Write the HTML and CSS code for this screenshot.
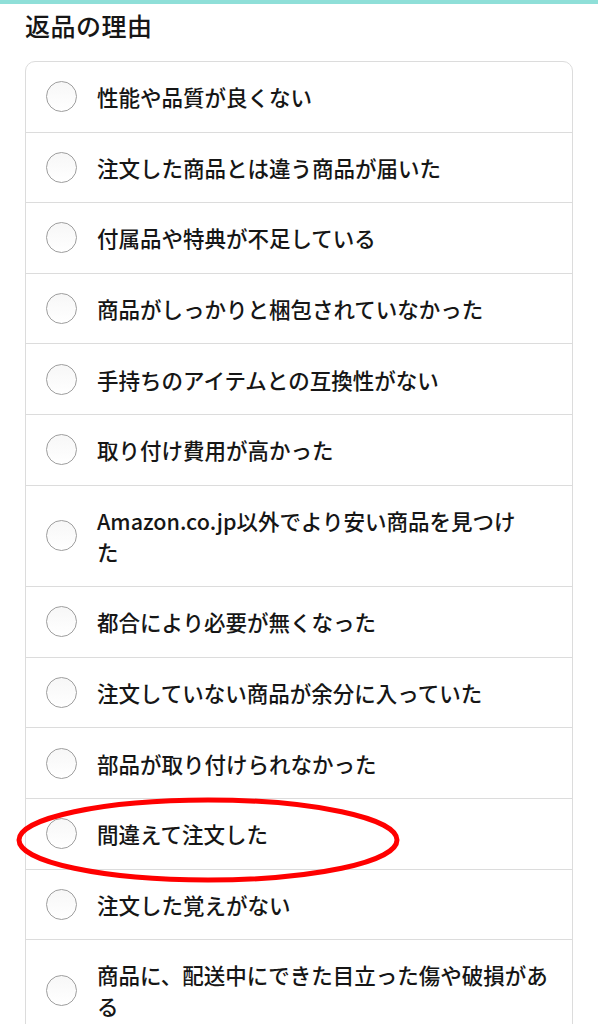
FILE: index.html
```html
<!DOCTYPE html>
<html lang="ja">
<head>
    <meta charset="UTF-8">
    <meta name="viewport" content="width=device-width, initial-scale=1.0">
    <title>返品の理由</title>
    <link rel="stylesheet" href="styles.css">
</head>
<body>
    <div class="top-bar"></div>

    <div class="page">
        <h1 class="page-title">返品の理由</h1>

        <ul class="reason-list">
            <li class="reason"><span class="radio"></span><span class="label">性能や品質が良くない</span></li>
            <li class="reason"><span class="radio"></span><span class="label">注文した商品とは違う商品が届いた</span></li>
            <li class="reason"><span class="radio"></span><span class="label">付属品や特典が不足している</span></li>
            <li class="reason"><span class="radio"></span><span class="label">商品がしっかりと梱包されていなかった</span></li>
            <li class="reason"><span class="radio"></span><span class="label">手持ちのアイテムとの互換性がない</span></li>
            <li class="reason"><span class="radio"></span><span class="label">取り付け費用が高かった</span></li>
            <li class="reason"><span class="radio"></span><span class="label">Amazon.co.jp以外でより安い商品を見つけ<br>た</span></li>
            <li class="reason"><span class="radio"></span><span class="label">都合により必要が無くなった</span></li>
            <li class="reason"><span class="radio"></span><span class="label">注文していない商品が余分に入っていた</span></li>
            <li class="reason"><span class="radio"></span><span class="label">部品が取り付けられなかった</span></li>
            <li class="reason marked">
                <span class="radio"></span><span class="label">間違えて注文した</span>
                <!-- red annotation ring -->
                <svg class="mark" width="390" height="92" viewBox="0 0 390 92">
                    <ellipse cx="195" cy="46" rx="189" ry="40" fill="none" stroke="#f00" stroke-width="5"/>
                </svg>
            </li>
            <li class="reason"><span class="radio"></span><span class="label">注文した覚えがない</span></li>
            <li class="reason"><span class="radio"></span><span class="label">商品に、配送中にできた目立った傷や破損があ<br>る</span></li>
        </ul>
    </div>
</body>
</html>
```

FILE: styles.css
```css
:root {
    --bar-color: #8fdfd8;
    --line-color: #dcdcdc;
    --text-color: #161616;
}
body, html {
    margin: 0;
    padding: 0;
    font-family: "Noto Sans CJK JP", "Noto Sans", sans-serif;
    background: #fff;
    color: var(--text-color);
}
.top-bar {
    height: 4px;
    background: var(--bar-color);
}
.page {
    padding: 0 25px;
}
.page-title {
    margin: 3px 0 18px;
    font-size: 25px;
    line-height: 36px;
    font-weight: 500;
    letter-spacing: 0.5px;
}
.reason-list {
    list-style: none;
    margin: 0;
    padding: 0;
    border: 1px solid var(--line-color);
    border-radius: 10px;
}
.reason {
    position: relative;
    display: flex;
    align-items: center;
    padding: 19.3px 20px;
    border-bottom: 1px solid var(--line-color);
}
.reason:last-child {
    border-bottom: none;
}
.radio {
    flex: none;
    width: 29px;
    height: 29px;
    border: 1.5px solid #9e9e9e;
    border-radius: 50%;
    background: linear-gradient(#f7f7f7, #fff);
    margin: -1px 20px -1px 0;
}
.label {
    font-size: 21.5px;
    line-height: 31px;
    font-weight: 500;
}
.mark {
    position: absolute;
    left: -13px;
    top: -5px;
}
```
